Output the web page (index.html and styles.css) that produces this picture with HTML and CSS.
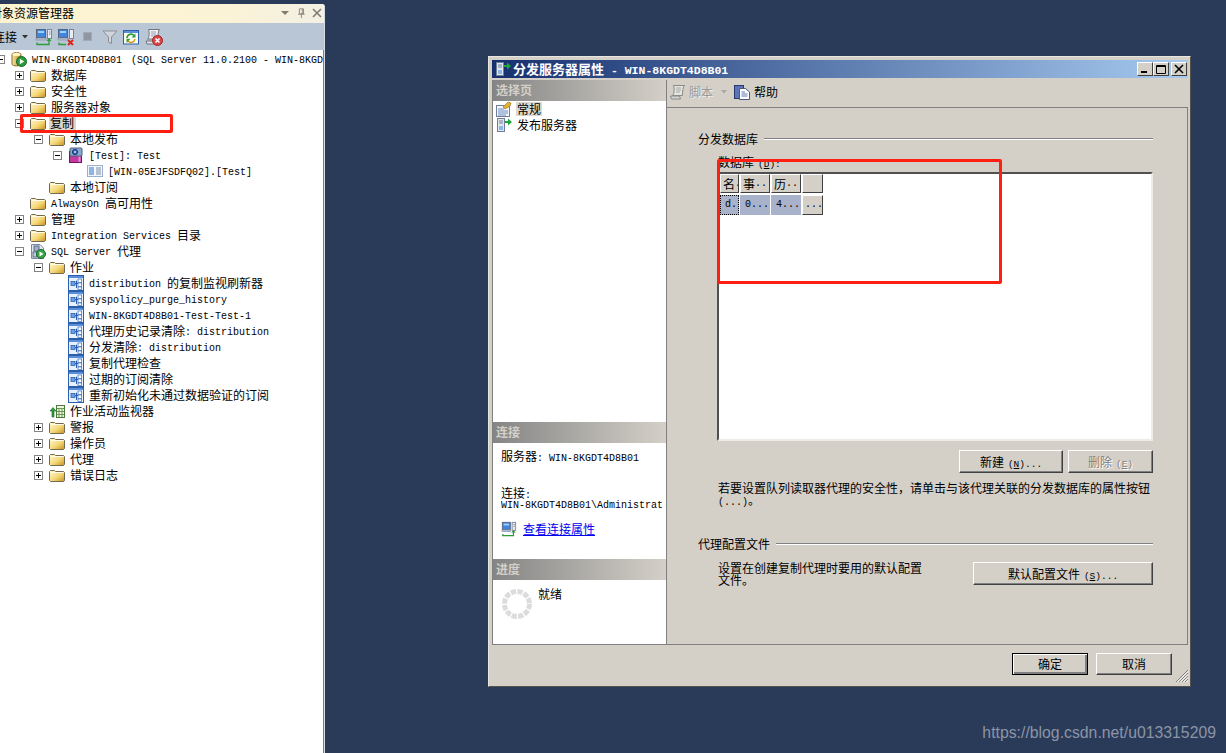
FILE: index.html
```html
<!DOCTYPE html>
<html lang="zh">
<head>
<meta charset="utf-8">
<title>分发服务器属性</title>
<link rel="stylesheet" href="styles.css">
</head>
<body>
<svg class="defs" width="0" height="0" aria-hidden="true">
  <defs>
    <linearGradient id="gf" x1="0" y1="0" x2="1" y2="1"><stop offset="0" stop-color="#fff8d8"/><stop offset=".55" stop-color="#f6d878"/><stop offset="1" stop-color="#c98f1e"/></linearGradient>
    <linearGradient id="gc" x1="0" y1="0" x2="1" y2="0"><stop offset="0" stop-color="#fbe9a8"/><stop offset="1" stop-color="#b8811c"/></linearGradient>
    <symbol id="folder" viewBox="0 0 16 16"><path d="M.5 13.5V4.5L1.5 3.5H5.5L6.5 4.5H14.5L15.5 5.5V13.5L14.5 14.5H1.5Z" fill="url(#gf)" stroke="#6f6a50"/><path d="M1.5 5.5H14.5" stroke="#fffbe6"/></symbol>
    <symbol id="server" viewBox="0 0 16 16"><path d="M1 3.5C1 1 10 1 10 3.5V13C10 15.5 1 15.5 1 13Z" fill="url(#gc)" stroke="#8a6a20"/><ellipse cx="5.5" cy="3.4" rx="4" ry="1.6" fill="#fff3c0"/><circle cx="10.5" cy="10.5" r="5" fill="#2c9a3a" stroke="#16662a"/><path d="M8.8 7.8V13.2L13.2 10.5Z" fill="#fff"/></symbol>
    <symbol id="job" viewBox="0 0 16 16"><rect x=".5" y=".5" width="15" height="15" fill="#e8f0fc" stroke="#2b5fae"/><rect x="1" y="1" width="14" height="2" fill="#5a8fd8"/><rect x="3" y="6.5" width="4" height="4" fill="#6ba0e8" stroke="#2b5fae" stroke-width=".8"/><rect x="10" y="4" width="3.6" height="3.4" fill="#fff" stroke="#4d7fc8" stroke-width=".8"/><rect x="10" y="8" width="3.6" height="3.4" fill="#fff" stroke="#4d7fc8" stroke-width=".8"/><rect x="10" y="12" width="3.6" height="2.4" fill="#fff" stroke="#4d7fc8" stroke-width=".8"/><path d="M7 8.5H10M8.5 5.7V13" stroke="#2b5fae" fill="none"/></symbol>
    <symbol id="pub" viewBox="0 0 16 16"><rect x="1.500" y="4.500" width="12" height="11" fill="#c23aa0" stroke="#6b1460"/><path d="M11.500 5V15" stroke="#e88ad0" stroke-width="2"/><rect x="2" y="1" width="12" height="8" rx="1" fill="#8aa8cc" stroke="#4a5f80"/><circle cx="7" cy="5" r="2.6" fill="#3566b8" stroke="#1c3a70"/><circle cx="7" cy="5" r="1" fill="#cfe0f8"/></symbol>
    <symbol id="article" viewBox="0 0 16 16"><rect x=".5" y="2.500" width="15" height="11" fill="#f3f7fc" stroke="#9bb0cc"/><rect x="2" y="4" width="5" height="8" fill="#8fb4e6"/><path d="M9 5H14M9 7H14M9 9H14M9 11H14" stroke="#7a8ea8"/></symbol>
    <symbol id="monitor" viewBox="0 0 16 16"><rect x="7.500" y="2.500" width="8" height="12" fill="#eef5e0" stroke="#4d7a3a"/><path d="M8 5.500H15M10 5V14M13 5V14M8 8.500H15M8 11.500H15" stroke="#6a9a50"/><path d="M1 8L4 4.500 7 8H5V14H3V8Z" fill="#2f9a3e" stroke="#16662a" stroke-width=".6"/></symbol>
    <symbol id="agent" viewBox="0 0 16 16"><path d="M1.500 1.500H10L13.500 5V15.500H1.500Z" fill="#e4eaf3" stroke="#7a8aa0"/><rect x="4" y="3" width="5" height="5" fill="#9fb3cc" stroke="#5a6a80"/><rect x="3" y="9" width="4" height="5" fill="#c0ccdc" stroke="#5a6a80"/><circle cx="11" cy="11" r="4.500" fill="#3aa648" stroke="#16662a"/><path d="M9.500 8.500V13.500L13.500 11Z" fill="#fff"/></symbol>
    <symbol id="connect" viewBox="0 0 18 18"><rect x="1.500" y="1.500" width="9" height="8" fill="#3f86e0" stroke="#56657c"/><rect x="3" y="3" width="6" height="2" fill="#9fd0ff"/><rect x="1" y="10" width="10" height="2" fill="#b8c4d4" stroke="#78859a" stroke-width=".6"/><rect x="12.500" y="1.500" width="4" height="9" fill="#e8ecf2" stroke="#78859a"/><path d="M14 4h1.500M14 6h1.500" stroke="#78859a"/><path d="M2 14.500V16.500H14V12" stroke="#2f9a3e" fill="none" stroke-width="1.400"/><path d="M11.500 13L14 10 16.500 13Z" fill="#2f9a3e"/></symbol>
    <symbol id="disconnect" viewBox="0 0 18 18"><rect x="1.500" y="1.500" width="9" height="8" fill="#3f86e0" stroke="#56657c"/><rect x="3" y="3" width="6" height="2" fill="#9fd0ff"/><rect x="1" y="10" width="10" height="2" fill="#b8c4d4" stroke="#78859a" stroke-width=".6"/><rect x="12.500" y="1.500" width="4" height="9" fill="#e8ecf2" stroke="#78859a"/><path d="M2 14.500V16.500H9" stroke="#2f9a3e" fill="none" stroke-width="1.400"/><path d="M11 12L16 17M16 12L11 17" stroke="#d8281c" stroke-width="2"/></symbol>
    <symbol id="funnel" viewBox="0 0 16 16"><path d="M1 2H15L9.500 8V14.500L6.500 13V8Z" fill="#d2d6dc" stroke="#8a8f96"/></symbol>
    <symbol id="refresh" viewBox="0 0 16 16"><rect x=".5" y="1.500" width="15" height="13.500" fill="#fdfdf4" stroke="#2b5fae"/><rect x="1" y="2" width="14" height="2" fill="#5a8fd8"/><path d="M4 9A4 4 0 0 1 11 6.500" stroke="#2f9a3e" fill="none" stroke-width="1.600"/><path d="M12.500 4.500V8.500H8.500Z" fill="#2f9a3e"/><path d="M12 10A4 4 0 0 1 5 12" stroke="#d89a1c" fill="none" stroke-width="1.600"/><path d="M3.500 14V9.800H7.500Z" fill="#2f9a3e"/></symbol>
    <symbol id="scriptx" viewBox="0 0 18 18"><path d="M3.500 1.500H14.500C13 3 13 7 13 11H2.500C4.500 10 4.500 4 3.500 1.500Z" fill="#eef0f4" stroke="#70757c"/><path d="M6 4H11M6 6H11M6 8H10" stroke="#9aa0a8"/><path d="M1 13H9V16H2Z" fill="#dfe2e6" stroke="#70757c"/><circle cx="12.500" cy="12.500" r="5" fill="#d8484a" stroke="#a02428"/><path d="M10.500 10.500L14.500 14.500M14.500 10.500L10.500 14.500" stroke="#fff" stroke-width="1.500"/></symbol>
    <symbol id="props" viewBox="0 0 16 16"><rect x=".5" y="4.500" width="13" height="11" fill="#f4f6fa" stroke="#6f7f98"/><path d="M2 8H8M2 10H12M2 12H12M2 14H10" stroke="#6b8cc0"/><path d="M7 6L12 1 15 2 14 5 9 8Z" fill="#e8b030" stroke="#8a6a20" stroke-width=".6"/></symbol>
    <symbol id="pubsrv" viewBox="0 0 16 16"><rect x="1.500" y="1.500" width="7" height="13" fill="#dfe6ee" stroke="#6f7f98"/><path d="M3 4H7M3 6H7" stroke="#6f7f98"/><rect x="3" y="9" width="4" height="4" fill="#8fb4e6"/><path d="M9 4H12V1.500L16 5 12 8.500V6H9Z" fill="#1fa83a"/></symbol>
    <symbol id="scriptg" viewBox="0 0 16 16"><path d="M3.500 1.500H14.500C13 3 12.500 7 12.500 11.500H2.500C4.500 10 4.500 4 3.500 1.500Z" fill="#e4e4e0" stroke="#8a8a86"/><path d="M6 4H11M6 6H11M6 8H10" stroke="#a8a8a4"/><path d="M.5 12H9.500L10.500 15H1.500Z" fill="#d4d4d0" stroke="#8a8a86"/></symbol>
    <symbol id="help" viewBox="0 0 16 16"><rect x=".5" y="1.500" width="9" height="13" fill="#5c74b8" stroke="#27396e"/><path d="M5.500 4.500H11.500L15.500 8V15.500H5.500Z" fill="#fff" stroke="#4a5a80"/><path d="M7.500 8H11M7.500 10H13.500M7.500 12H13.500" stroke="#5c74b8"/></symbol>
  </defs>
</svg>

<aside class="explorer">
  <header class="ex-title">
    <span class="ex-name">对象资源管理器</span>
    <span class="ex-ctrls">
      <svg class="ctl" viewBox="0 0 10 10"><path d="M1 3H9L5 7Z" fill="#7f7d72"/></svg>
      <svg class="ctl" viewBox="0 0 10 12"><path d="M3 1H8V7H3ZM1.500 7.500H9.500M5.500 8V12M6.500 1V7" stroke="#7f7d72" fill="none"/></svg>
      <svg class="ctl" viewBox="0 0 10 10"><path d="M1 1L9 9M9 1L1 9" stroke="#7f7d72" stroke-width="1.600"/></svg>
    </span>
  </header>
  <div class="ex-tools">
    <span class="ex-conn">连接</span>
    <svg class="drop" viewBox="0 0 6 4"><path d="M0 0H6L3 3.500Z" fill="#333"/></svg>
    <svg class="ti first"><use href="#connect"/></svg>
    <svg class="ti"><use href="#disconnect"/></svg>
    <span class="stop"></span>
    <svg class="ti16 fun"><use href="#funnel"/></svg>
    <svg class="ti16 ref"><use href="#refresh"/></svg>
    <svg class="ti scr"><use href="#scriptx"/></svg>
  </div>
  <div class="tree">
    <div class="row l0"><i class="exp minus"></i><svg class="ic"><use href="#server"/></svg><span class="tx"><span class="m root-name">WIN-8KGDT4D8B01</span><span class="m">(SQL Server 11.0.2100 - WIN-8KGDT4D8B01\Administrator)</span></span></div>
    <div class="row l1"><i class="exp plus"></i><svg class="ic"><use href="#folder"/></svg><span class="tx">数据库</span></div>
    <div class="row l1"><i class="exp plus"></i><svg class="ic"><use href="#folder"/></svg><span class="tx">安全性</span></div>
    <div class="row l1"><i class="exp plus"></i><svg class="ic"><use href="#folder"/></svg><span class="tx">服务器对象</span></div>
    <div class="row l1"><i class="exp minus"></i><svg class="ic"><use href="#folder"/></svg><span class="tx sel">复制</span></div>
    <div class="row l2"><i class="exp minus"></i><svg class="ic"><use href="#folder"/></svg><span class="tx">本地发布</span></div>
    <div class="row l3"><i class="exp minus"></i><svg class="ic"><use href="#pub"/></svg><span class="tx"><span class="m">[Test]: Test</span></span></div>
    <div class="row l4"><i class="exp none"></i><svg class="ic"><use href="#article"/></svg><span class="tx"><span class="m">[WIN-05EJFSDFQ02].[Test]</span></span></div>
    <div class="row l2"><i class="exp none"></i><svg class="ic"><use href="#folder"/></svg><span class="tx">本地订阅</span></div>
    <div class="row l1"><i class="exp none"></i><svg class="ic"><use href="#folder"/></svg><span class="tx"><span class="m">AlwaysOn </span>高可用性</span></div>
    <div class="row l1"><i class="exp plus"></i><svg class="ic"><use href="#folder"/></svg><span class="tx">管理</span></div>
    <div class="row l1"><i class="exp plus"></i><svg class="ic"><use href="#folder"/></svg><span class="tx"><span class="m">Integration Services </span>目录</span></div>
    <div class="row l1"><i class="exp minus"></i><svg class="ic"><use href="#agent"/></svg><span class="tx"><span class="m">SQL Server </span>代理</span></div>
    <div class="row l2"><i class="exp minus"></i><svg class="ic"><use href="#folder"/></svg><span class="tx">作业</span></div>
    <div class="row l3"><i class="exp none"></i><svg class="ic"><use href="#job"/></svg><span class="tx"><span class="m">distribution </span>的复制监视刷新器</span></div>
    <div class="row l3"><i class="exp none"></i><svg class="ic"><use href="#job"/></svg><span class="tx"><span class="m">syspolicy_purge_history</span></span></div>
    <div class="row l3"><i class="exp none"></i><svg class="ic"><use href="#job"/></svg><span class="tx"><span class="m">WIN-8KGDT4D8B01-Test-Test-1</span></span></div>
    <div class="row l3"><i class="exp none"></i><svg class="ic"><use href="#job"/></svg><span class="tx">代理历史记录清除<span class="m">: distribution</span></span></div>
    <div class="row l3"><i class="exp none"></i><svg class="ic"><use href="#job"/></svg><span class="tx">分发清除<span class="m">: distribution</span></span></div>
    <div class="row l3"><i class="exp none"></i><svg class="ic"><use href="#job"/></svg><span class="tx">复制代理检查</span></div>
    <div class="row l3"><i class="exp none"></i><svg class="ic"><use href="#job"/></svg><span class="tx">过期的订阅清除</span></div>
    <div class="row l3"><i class="exp none"></i><svg class="ic"><use href="#job"/></svg><span class="tx">重新初始化未通过数据验证的订阅</span></div>
    <div class="row l2"><i class="exp none"></i><svg class="ic"><use href="#monitor"/></svg><span class="tx">作业活动监视器</span></div>
    <div class="row l2"><i class="exp plus"></i><svg class="ic"><use href="#folder"/></svg><span class="tx">警报</span></div>
    <div class="row l2"><i class="exp plus"></i><svg class="ic"><use href="#folder"/></svg><span class="tx">操作员</span></div>
    <div class="row l2"><i class="exp plus"></i><svg class="ic"><use href="#folder"/></svg><span class="tx">代理</span></div>
    <div class="row l2"><i class="exp plus"></i><svg class="ic"><use href="#folder"/></svg><span class="tx">错误日志</span></div>
  </div>
</aside>

<section class="dialog">
  <header class="dlg-title">
    <svg class="ic"><use href="#pubsrv"/></svg>
    <span class="dlg-name">分发服务器属性<span class="mb"> - WIN-8KGDT4D8B01</span></span>
    <span class="win-btns">
      <button class="wb"><svg viewBox="0 0 12 10"><path d="M2 8H8" stroke="#000" stroke-width="2"/></svg></button>
      <button class="wb"><svg viewBox="0 0 12 10"><path d="M1.500 1.500H10.500V9.500H1.500ZM1.500 2.500H10.500" stroke="#000" fill="none"/></svg></button>
      <button class="wb close"><svg viewBox="0 0 12 10"><path d="M2 1L10 9M10 1L2 9" stroke="#000" stroke-width="1.600"/></svg></button>
    </span>
  </header>
  <div class="dlg-body">
    <nav class="side">
      <h3 class="side-h">选择页</h3>
      <div class="pages">
        <div class="page"><svg class="ic"><use href="#props"/></svg><span class="page-t cur">常规</span></div>
        <div class="page"><svg class="ic"><use href="#pubsrv"/></svg><span class="page-t">发布服务器</span></div>
      </div>
      <h3 class="side-h">连接</h3>
      <div class="conn">
        <p class="srv">服务器<span class="m">: WIN-8KGDT4D8B01</span></p>
        <p class="c-l">连接<span class="m">:</span></p>
        <p class="c-v"><span class="m">WIN-8KGDT4D8B01\Administrator</span></p>
        <div class="linkrow"><svg class="ic"><use href="#connect"/></svg><a class="lnk" href="#">查看连接属性</a></div>
      </div>
      <h3 class="side-h">进度</h3>
      <div class="prog">
        <svg class="spin" viewBox="0 0 30 30"><circle cx="15" cy="15" r="12.500" fill="none" stroke="#dcdcdc" stroke-width="5" stroke-dasharray="5.200 1.350"/></svg>
        <span>就绪</span>
      </div>
    </nav>
    <div class="main">
      <div class="tools">
        <svg class="ic"><use href="#scriptg"/></svg><span class="dis">脚本</span>
        <svg class="drop2" viewBox="0 0 6 4"><path d="M0 0H6L3 3.500Z" fill="#a8a8a4"/></svg>
        <svg class="ic help"><use href="#help"/></svg><span>帮助</span>
      </div>
      <div class="panel">
        <div class="ghead"><span>分发数据库</span><hr class="rule"></div>
        <label class="db-l">数据库<span class="mn">(<u>D</u>):</span></label>
        <div class="listbox">
          <div class="grid">
            <span class="hc">名<span class="m">.</span></span><span class="hc">事<span class="m">..</span></span><span class="hc">历<span class="m">..</span></span><span class="hc"></span>
            <span class="dc focus"><span class="m">d.</span></span><span class="dc"><span class="m">0...</span></span><span class="dc"><span class="m">4...</span></span><span class="hc"><span class="m">...</span></span>
          </div>
        </div>
        <div class="btns">
          <button class="btn new">新建<span class="mn">(<u>N</u>)...</span></button>
          <button class="btn del" disabled>删除<span class="mn">(<u>E</u>)</span></button>
        </div>
        <p class="note">若要设置队列读取器代理的安全性，请单击与该代理关联的分发数据库的属性按钮<span class="m">(...)</span>。</p>
        <div class="ghead second"><span>代理配置文件</span><hr class="rule"></div>
        <div class="prof">
          <p class="prof-t">设置在创建复制代理时要用的默认配置文件。</p>
          <button class="btn wide">默认配置文件<span class="mn">(<u>S</u>)...</span></button>
        </div>
      </div>
    </div>
  </div>
  <footer class="dlg-foot">
    <button class="btn ok">确定</button>
    <button class="btn cancel">取消</button>
    <svg class="grip" viewBox="0 0 14 14"><path d="M13 1L1 13M13 4L4 13M13 7L7 13M13 10L10 13" stroke="#808080"/><path d="M13 2.500L2.500 13M13 5.500L5.500 13M13 8.500L8.500 13M13 11.500L11.500 13" stroke="#fff"/></svg>
  </footer>
</section>

<div class="red r1"></div>
<div class="red r2"></div>
<div class="mark">https://blog.csdn.net/u013315209</div>
</body>
</html>
```
FILE: styles.css
```css
* { box-sizing: border-box; }
html, body { margin: 0; height: 100%; }
body {
  width: 1226px;
  height: 753px;
  position: relative;
  overflow: hidden;
  background: #2a3a59;
  font: 12px/16px "Noto Sans CJK SC", "Liberation Sans", sans-serif;
  color: #000;
}
p, h3 { margin: 0; }
.defs { position: absolute; }
.m { font-family: "Liberation Mono", monospace; font-size: 10px; line-height: 10px; white-space: pre; }
.mn { font-family: "Liberation Mono", monospace; font-size: 9.5px; line-height: 10px; white-space: pre; margin-left: 4px; }
.mb { font-family: "Liberation Mono", monospace; font-size: 11.5px; line-height: 10px; font-weight: 700; white-space: pre; }
.ic { width: 16px; height: 16px; flex: none; display: block; }

/* explorer */
.explorer {
  width: 325px;
  height: 749px;
  margin-top: 4px;
  background: #fff;
  border-right: 1px solid #d8dce2;
  border-top-right-radius: 3px;
  display: flex;
  flex-direction: column;
  overflow: hidden;
}
.ex-title {
  height: 19px;
  flex: none;
  background: linear-gradient(90deg, #fdf4cf, #fbf3d6 70%, #f3f0e4);
  display: flex;
  align-items: center;
  justify-content: space-between;
  padding: 0 2px 1px 0;
}
.ex-name { margin-left: -10px; white-space: nowrap; }
.ex-ctrls { display: flex; align-items: center; gap: 6px; }
.ctl { width: 10px; height: 10px; display: block; }
.ex-tools {
  height: 27px;
  flex: none;
  background: #b9c6d6;
  display: flex;
  align-items: center;
}
.ex-conn { margin-left: -7px; }
.drop { width: 6px; height: 4px; margin-left: 5px; }
.ti { width: 18px; height: 18px; flex: none; margin-left: 4px; }
.ti.first { margin-left: 7px; }
.ti16 { width: 16px; height: 16px; flex: none; }
.stop { width: 9px; height: 9px; background: #8e97a2; border: 1px solid #a2aab4; margin-left: 8px; }
.fun { margin-left: 10px; }
.ref { margin-left: 5px; }
.scr { margin-left: 6px; }

.tree { flex: 1; padding-top: 1px; overflow: hidden; white-space: nowrap; border-right: 1px solid #808080; }
.row { height: 16px; display: flex; align-items: center; }
.l0 { margin-left: -4px; }
.l1 { margin-left: 15px; }
.l2 { margin-left: 34px; }
.l3 { margin-left: 53px; }
.l4 { margin-left: 72px; }
.exp {
  width: 9px;
  height: 9px;
  flex: none;
  margin-right: 6px;
  position: relative;
  border: 1px solid #848484;
  background: #fff;
}
.exp.none { border: 0; background: none; }
.plus::before, .minus::before {
  content: "";
  position: absolute;
  left: 1px;
  top: 3px;
  width: 5px;
  height: 1px;
  background: #000;
}
.plus::after {
  content: "";
  position: absolute;
  left: 3px;
  top: 1px;
  width: 1px;
  height: 5px;
  background: #000;
}
.tx { margin-left: 4px; padding: 0 1px; height: 16px; line-height: 16px; }
.tx .m { vertical-align: 1px; }
.root-name { margin-right: 9px; }
.sel { background: #dbd7ce; padding: 0 2px 0 1px; margin: 0 0 0 3px; height: 14px; line-height: 14px; }

/* dialog */
.dialog {
  position: absolute;
  left: 488px;
  top: 56px;
  width: 703px;
  height: 631px;
  background: #d4d0c8;
  border: 1px solid;
  border-color: #e8e6e0 #55524c #55524c #e8e6e0;
  padding: 3px 2px 3px 3px;
  display: flex;
  flex-direction: column;
}
.dlg-title {
  height: 18px;
  flex: none;
  background: linear-gradient(90deg, #16306f, #a6caf0);
  color: #fff;
  font-weight: 700;
  display: flex;
  align-items: center;
  padding: 0 1px 0 3px;
}
.dlg-name { margin-left: 2px; flex: 1; font-size: 13px; }
.win-btns { display: flex; gap: 0; }
.wb {
  width: 16px;
  height: 14px;
  padding: 0;
  background: #d4d0c8;
  border: 1px solid;
  border-color: #fff #404040 #404040 #fff;
  display: flex;
  align-items: center;
  justify-content: center;
}
.wb svg { width: 12px; height: 10px; display: block; }
.wb.close { margin-left: 2px; }
.dlg-body { height: 565px; margin-top: 2px; flex: none; display: flex; }
.side {
  width: 175px;
  flex: none;
  background: #fff;
  border: 1px solid #808080;
  border-top: 0;
  display: flex;
  flex-direction: column;
}
.side-h {
  height: 21px;
  flex: none;
  background: linear-gradient(90deg, #858585, #d4d0c8);
  color: #d4d0c8;
  font-size: 12px;
  font-weight: 700;
  line-height: 19px;
  padding-left: 3px;
}
.pages { height: 321px; flex: none; }
.page { height: 16px; display: flex; align-items: center; padding-left: 3px; }
.page-t { margin-left: 4px; padding: 0 1px; }
.cur { background: #dcd8d0; line-height: 14px; }
.conn { height: 116px; flex: none; padding: 5px 4px 0 8px; white-space: nowrap; }
.c-l { margin-top: 23px; height: 10px; line-height: 12px; }
.c-v { height: 11px; line-height: 11px; overflow: hidden; }
.linkrow { display: flex; align-items: center; margin-top: 13px; }
.lnk { margin-left: 6px; color: #0000ee; text-decoration: underline; }
.prog { flex: 1; display: flex; padding: 6px 0 0 9px; }
.spin { width: 30px; height: 30px; margin: 3px 6px 0 0; flex: none; }

.main { flex: 1; display: flex; flex-direction: column; min-width: 0; }
.tools { height: 27px; flex: none; display: flex; align-items: center; padding: 0 0 3px 3px; }
.dis { margin-left: 3px; color: #9a9a96; text-shadow: 1px 1px 0 #eee; }
.drop2 { width: 6px; height: 4px; margin-left: 8px; }
.help { margin: 0 4px 0 7px; }
.panel {
  flex: 1;
  border: 1px solid #808080;
  border-left: 0;
  padding: 23px 34px 0 31px;
}
.ghead { display: flex; align-items: center; gap: 6px; white-space: nowrap; height: 16px; }
.ghead.second { margin-top: 30px; }
.rule { flex: 1; margin: 0; height: 2px; border: 0; border-top: 1px solid #808080; border-bottom: 1px solid #fff; }
.db-l { display: block; height: 16px; margin: 7px 0 2px 20px; }
.listbox {
  margin-left: 19px;
  height: 269px;
  background: #fff;
  border: 2px solid;
  border-color: #505050 #eeece6 #eeece6 #505050;
  padding: 0 0 0 1px;
}
.grid {
  display: grid;
  grid-template-columns: 19px 30px 30px 21px;
  grid-template-rows: 19px 20px;
  column-gap: 1px;
  row-gap: 2px;
  justify-content: start;
}
.hc, .dc { display: flex; align-items: center; white-space: nowrap; overflow: hidden; }
.hc {
  background: #d4d0c8;
  border: 1px solid;
  border-color: #fff #404040 #404040 #fff;
  padding-left: 2px;
}
.dc { background: #a9b2cb; padding-left: 5px; }
.focus { outline: 1px dotted #000; outline-offset: -1px; }
.btns { display: flex; justify-content: flex-end; gap: 5px; margin-top: 9px; }
.btn {
  height: 23px;
  padding: 0;
  font: inherit;
  color: #000;
  background: #d4d0c8;
  border: 1px solid;
  border-color: #fff #404040 #404040 #fff;
  box-shadow: inset -1px -1px 0 #808080;
  white-space: nowrap;
}
.new { width: 104px; }
.del { width: 85px; color: #808080; text-shadow: 1px 1px 0 #fff; }
.note { margin: 9px 0 0 20px; width: 434px; height: 24px; line-height: 12px; }
.prof { display: flex; justify-content: space-between; margin: 10px 0 0 20px; }
.prof-t { width: 210px; line-height: 12px; }
.wide { width: 180px; }
.dlg-foot {
  flex: 1;
  position: relative;
  display: flex;
  justify-content: flex-end;
  gap: 8px;
  padding: 8px 16px 0 0;
}
.ok, .cancel { width: 76px; height: 22px; }
.ok { border: 1px solid #000; box-shadow: inset 1px 1px 0 #fff, inset -2px -2px 0 #808080; }
.grip { position: absolute; right: -1px; bottom: 0; width: 14px; height: 14px; }

/* annotations */
.red { position: absolute; border: 3px solid #ff1f12; border-radius: 2px; }
.r1 { left: 20px; top: 114px; width: 153px; height: 19px; }
.r2 { left: 717px; top: 159px; width: 285px; height: 125px; }
.mark {
  position: absolute;
  right: 10px;
  top: 724px;
  font: 15.8px/18px "Liberation Sans", sans-serif;
  color: #8b95a6;
}
```
